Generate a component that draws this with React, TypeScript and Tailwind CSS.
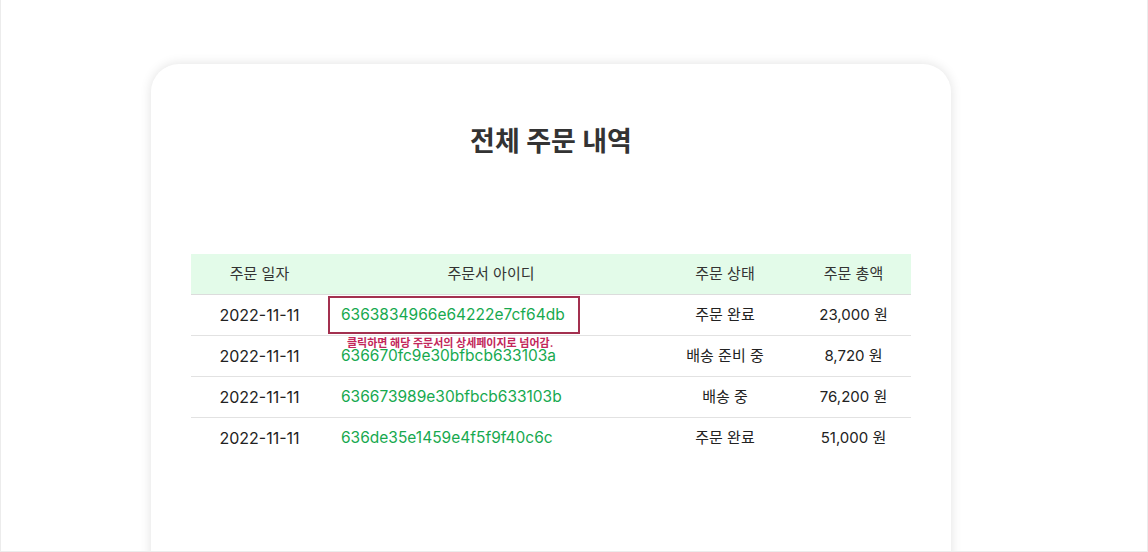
import React from "react";

const orders = [
  { date: "2022-11-11", id: "6363834966e64222e7cf64db", status: "주문 완료", total: "23,000 원" },
  { date: "2022-11-11", id: "636670fc9e30bfbcb633103a", status: "배송 준비 중", total: "8,720 원" },
  { date: "2022-11-11", id: "636673989e30bfbcb633103b", status: "배송 중", total: "76,200 원" },
  { date: "2022-11-11", id: "636de35e1459e4f5f9f40c6c", status: "주문 완료", total: "51,000 원" },
];

export default function App() {
  return (
    <div
      className="h-[552px] overflow-hidden border-x border-b border-[#ececec] bg-white"
      style={{ fontFamily: 'Inter, "Noto Sans CJK KR", sans-serif' }}
    >
      <div className="ml-[150px] mt-16 h-[560px] w-[800px] rounded-[28px] bg-white px-10 pt-[58px] shadow-[0_0_12px_rgba(0,0,0,0.12)]">
        <h1 className="text-center text-[27px] font-bold text-[#333]">전체 주문 내역</h1>

        <table className="mt-[91px] w-[720px] table-fixed border-collapse text-[15px] leading-[22px] text-[#222]">
          <colgroup>
            <col className="w-[137px]" />
            <col className="w-[326px]" />
            <col className="w-[142px]" />
            <col className="w-[115px]" />
          </colgroup>
          <thead>
            <tr className="h-[41px] border-b border-[#dcdcdc] bg-[#e3fbe9] text-[#333]">
              <th className="font-normal">주문 일자</th>
              <th className="font-normal">주문서 아이디</th>
              <th className="font-normal">주문 상태</th>
              <th className="font-normal">주문 총액</th>
            </tr>
          </thead>
          <tbody>
            {orders.map((o, i) => (
              <tr key={o.id} className="h-[41px] border-b border-[#e2e2e2] last:border-b-0">
                <td className="p-0 text-center text-[16px]">{o.date}</td>
                <td className="relative p-0">
                  <a
                    className={
                      i === 0
                        ? "inline-block border-2 border-[#a3304f] py-[6px] pl-[11px] pr-[13px] align-middle text-[15.5px] text-[#17a94f]"
                        : "inline-block border-2 border-transparent py-[6px] pl-[11px] pr-[13px] align-middle text-[15.5px] text-[#17a94f]"
                    }
                  >
                    {o.id}
                  </a>
                  {i === 0 && (
                    <span className="absolute left-[19px] top-[43px] text-[11px] font-bold leading-none text-[#c2275a]">
                      클릭하면 해당 주문서의 상세페이지로 넘어감.
                    </span>
                  )}
                </td>
                <td className="p-0 text-center">{o.status}</td>
                <td className="p-0 text-center">{o.total}</td>
              </tr>
            ))}
          </tbody>
        </table>
      </div>
    </div>
  );
}
